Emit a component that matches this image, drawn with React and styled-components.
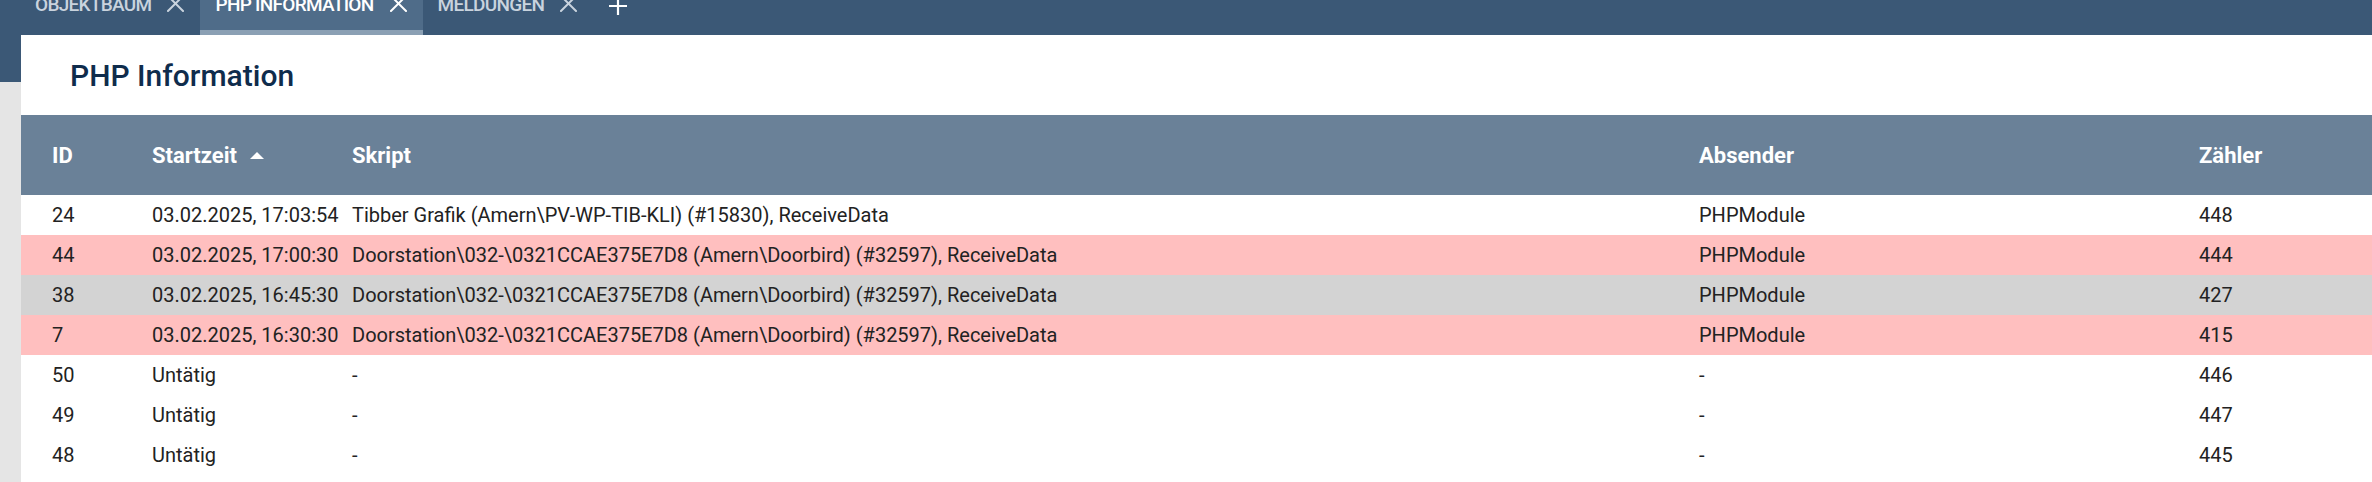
import styled, { createGlobalStyle } from "styled-components";

const GlobalStyle = createGlobalStyle`
  html, body {
    margin: 0;
    padding: 0;
  }

  body {
    font-family: Roboto, "Liberation Sans", sans-serif;
    background: linear-gradient(to bottom, #3b5876 0, #3b5876 82px, #e5e5e5 82px);
    min-height: 100vh;
  }
`;

const tabs = [
  { label: "Objektbaum" },
  { label: "PHP Information", active: true },
  { label: "Meldungen" },
];

const columns = [
  { key: "id", label: "ID" },
  { key: "start", label: "Startzeit", sorted: true },
  { key: "script", label: "Skript" },
  { key: "sender", label: "Absender" },
  { key: "count", label: "Zähler" },
];

const doorbird = "Doorstation\\032-\\0321CCAE375E7D8 (Amern\\Doorbird) (#32597), ReceiveData";

const rows = [
  { id: 24, start: "03.02.2025, 17:03:54", script: "Tibber Grafik (Amern\\PV-WP-TIB-KLI) (#15830), ReceiveData", sender: "PHPModule", count: 448 },
  { id: 44, start: "03.02.2025, 17:00:30", script: doorbird, sender: "PHPModule", count: 444, tone: "alert" },
  { id: 38, start: "03.02.2025, 16:45:30", script: doorbird, sender: "PHPModule", count: 427, tone: "muted" },
  { id: 7, start: "03.02.2025, 16:30:30", script: doorbird, sender: "PHPModule", count: 415, tone: "alert" },
  { id: 50, start: "Untätig", script: "-", sender: "-", count: 446 },
  { id: 49, start: "Untätig", script: "-", sender: "-", count: 447 },
  { id: 48, start: "Untätig", script: "-", sender: "-", count: 445 },
];

const rowColors = {
  alert: "#ffbfbf",
  muted: "#d3d3d3",
};

const CloseIcon = () => (
  <svg width="17" height="17" viewBox="0 0 17 17" fill="none">
    <path d="M1 1L16 16M16 1L1 16" stroke="currentColor" strokeWidth="2" strokeLinecap="square" />
  </svg>
);

const PlusIcon = () => (
  <svg width="18" height="18" viewBox="0 0 18 18" fill="none">
    <path d="M9 0V18M0 9H18" stroke="currentColor" strokeWidth="2.2" />
  </svg>
);

const SortArrow = () => (
  <svg width="14" height="7" viewBox="0 0 14 7">
    <path d="M0 7L7 0L14 7Z" fill="currentColor" />
  </svg>
);

const App = () => {
  return (
    <>
      <GlobalStyle />
      <TabBar>
        {tabs.map((tab) => (
          <Tab key={tab.label} $active={tab.active}>
            <TabLabel>{tab.label}</TabLabel>
            <TabClose>
              <CloseIcon />
            </TabClose>
          </Tab>
        ))}
        <AddTab>
          <PlusIcon />
        </AddTab>
      </TabBar>
      <Card>
        <Title>PHP Information</Title>
        <Table>
          <HeaderRow>
            {columns.map((col) => (
              <HeaderCell key={col.key}>
                {col.label}
                {col.sorted && (
                  <SortMark>
                    <SortArrow />
                  </SortMark>
                )}
              </HeaderCell>
            ))}
          </HeaderRow>
          {rows.map((row) => (
            <Row key={row.id} $tone={row.tone}>
              {columns.map((col) => (
                <Cell key={col.key}>{row[col.key]}</Cell>
              ))}
            </Row>
          ))}
        </Table>
      </Card>
    </>
  );
};

const TabBar = styled.nav`
  display: flex;
  height: 35px;
  padding-left: 20px;
  overflow: hidden;
`;

const Tab = styled.div`
  box-sizing: border-box;
  display: flex;
  align-items: flex-start;
  height: 35px;
  padding: 0 16px 0 15px;
  gap: 16px;
  color: ${(p) => (p.$active ? "#ffffff" : "#c9d3de")};
  background: ${(p) => (p.$active ? "#4f6c89" : "transparent")};
  border-bottom: 5px solid ${(p) => (p.$active ? "#8ba0b4" : "transparent")};
`;

const TabLabel = styled.span`
  font-size: 19px;
  line-height: 19px;
  font-weight: 500;
  text-transform: uppercase;
  letter-spacing: -0.7px;
  margin-top: -5px;
  white-space: nowrap;
`;

const TabClose = styled.span`
  display: flex;
  margin-top: -5px;
`;

const AddTab = styled.span`
  display: flex;
  color: #ffffff;
  padding-left: 16px;
  margin-top: -3px;
`;

const Card = styled.main`
  margin-left: 21px;
  background: #ffffff;
  min-height: calc(100vh - 35px);
`;

const Title = styled.h1`
  margin: 0;
  height: 80px;
  display: flex;
  align-items: center;
  padding-left: 49px;
  font-size: 30px;
  font-weight: 500;
  color: #0f2c4c;
`;

const Table = styled.div`
  display: flex;
  flex-direction: column;
`;

const grid = `
  display: grid;
  grid-template-columns: 100px 200px 1347px 500px 1fr;
  padding-left: 31px;
  align-items: center;
`;

const HeaderRow = styled.div`
  ${grid}
  height: 80px;
  background: #6a8198;
`;

const HeaderCell = styled.div`
  display: flex;
  align-items: center;
  gap: 13px;
  color: #ffffff;
  font-size: 22px;
  font-weight: 700;
  white-space: nowrap;
`;

const SortMark = styled.span`
  display: flex;
  margin-top: 1px;
`;

const Row = styled.div`
  ${grid}
  height: 40px;
  background: ${(p) => rowColors[p.$tone] || "#ffffff"};
`;

const Cell = styled.div`
  font-size: 20px;
  color: #222222;
  white-space: nowrap;
`;

export default App;
